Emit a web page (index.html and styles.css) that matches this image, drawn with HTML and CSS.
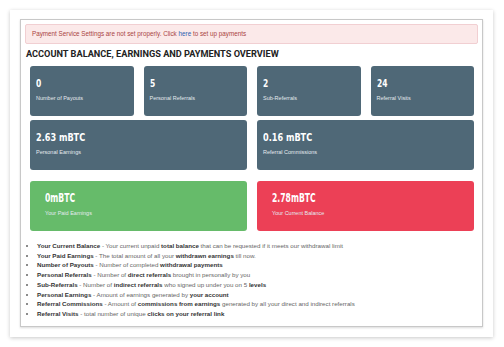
FILE: index.html
```html
<!DOCTYPE html>
<html lang="en">
<head>
    <meta charset="UTF-8">
    <title>Account Overview</title>
    <link rel="stylesheet" href="styles.css">
</head>
<body>
<div class="frame">
    <div class="panel">
        <div class="alert">Payment Service Settings are not set properly. Click <a href="#">here</a> to set up payments</div>

        <h1>Account Balance, Earnings and Payments Overview</h1>

        <div class="stats">
            <div class="stat">
                <div class="value">0</div>
                <div class="label">Number of Payouts</div>
            </div>
            <div class="stat">
                <div class="value">5</div>
                <div class="label">Personal Referrals</div>
            </div>
            <div class="stat">
                <div class="value">2</div>
                <div class="label">Sub-Referrals</div>
            </div>
            <div class="stat">
                <div class="value">24</div>
                <div class="label">Referral Visits</div>
            </div>
            <div class="stat wide">
                <div class="value">2.63 mBTC</div>
                <div class="label">Personal Earnings</div>
            </div>
            <div class="stat wide">
                <div class="value">0.16 mBTC</div>
                <div class="label">Referral Commissions</div>
            </div>
        </div>

        <div class="balances">
            <div class="stat big paid">
                <div class="value">0mBTC</div>
                <div class="label">Your Paid Earnings</div>
            </div>
            <div class="stat big current">
                <div class="value">2.78mBTC</div>
                <div class="label">Your Current Balance</div>
            </div>
        </div>

        <ul class="legend">
            <li><b>Your Current Balance</b> - Your current unpaid <b>total balance</b> that can be requested if it meets our withdrawal limit</li>
            <li><b>Your Paid Earnings</b> - The total amount of all your <b>withdrawn earnings</b> till now.</li>
            <li><b>Number of Payouts</b> - Number of completed <b>withdrawal payments</b></li>
            <li><b>Personal Referrals</b> - Number of <b>direct referrals</b> brought in personally by you</li>
            <li><b>Sub-Referrals</b> - Number of <b>indirect referrals</b> who signed up under you on 5 <b>levels</b></li>
            <li><b>Personal Earnings</b> - Amount of earnings generated by <b>your account</b></li>
            <li><b>Referral Commissions</b> - Amount of <b>commissions from earnings</b> generated by all your direct and indirect referrals</li>
            <li><b>Referral Visits</b> - total number of unique <b>clicks on your referral link</b></li>
        </ul>
    </div>
</div>
</body>
</html>
```

FILE: styles.css
```css
body {
    margin: 0;
    background: #ffffff;
    font-family: "Liberation Sans", Arial, sans-serif;
    color: #555;
}
.frame {
    margin: 10px 11px 10px 10px;
    padding: 9px 10px 10px 10px;
    background: #fff;
    box-shadow: 0 1px 4px rgba(0,0,0,.22);
}
.panel {
    border: 1px solid #c8c8c8;
    box-shadow: 0 1px 2px rgba(0,0,0,.15);
    padding: 4px 4px 4px 4px;
}
.alert {
    height: 18px;
    line-height: 18px;
    padding: 0 6px;
    background: #fbe9e9;
    border: 1px solid #f1cfd2;
    border-radius: 2px;
    color: #a94442;
    font-size: 6.3px;
}
.alert a { color: #2a5db0; text-decoration: none; }
h1 {
    margin: 5px 0 7px 1px;
    font-family: Roboto, "Liberation Sans", sans-serif;
    font-size: 9.2px;
    line-height: 10px;
    font-weight: 700;
    text-transform: uppercase;
    color: #222;
}
.stats {
    display: grid;
    grid-template-columns: repeat(4, 1fr);
    gap: 4px 10px;
    margin: 0 4px 0 5px;
}
.balances {
    display: grid;
    grid-template-columns: 1fr 1fr;
    gap: 10px;
    margin: 11px 4px 0 5px;
}
.stat {
    height: 50px;
    box-sizing: border-box;
    padding: 7px 6px;
    background: #4f6877;
    border-radius: 3px;
    color: #fff;
}
.stat.wide { grid-column: span 2; }
/* narrow, tall figures like a condensed display face */
.stat .value {
    display: inline-block;
    transform: scaleX(.72);
    transform-origin: left center;
    font-family: "DejaVu Sans", sans-serif;
    font-weight: 700;
    font-size: 10.5px;
    line-height: 14px;
}
.stat.wide .value { font-size: 11px; transform: scaleX(.74); }
.stat .label {
    margin-top: 3px;
    font-size: 5.5px;
    line-height: 8px;
    color: #e4eaee;
}
.stat.big { padding: 7px 15px; }
.stat.big .value { font-size: 12px; transform: scaleX(.64); }
.paid { background: #66bb6a; }
.current { background: #ec4056; }
.legend {
    margin: 10px 0 3px 0;
    padding-left: 12px;
    font-size: 6.2px;
    line-height: 9.7px;
    color: #666;
}
.legend b { color: #333; }
```
